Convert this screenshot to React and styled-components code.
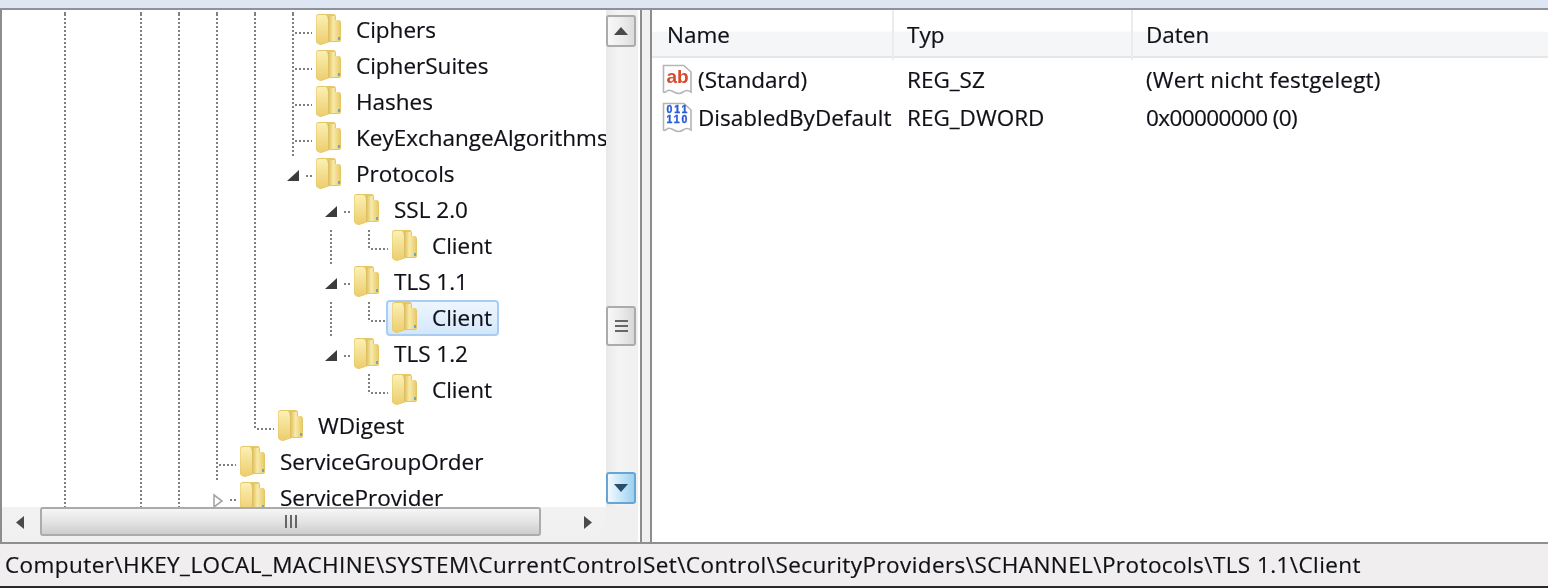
import React from 'react'
import styled, { createGlobalStyle } from 'styled-components'

const GlobalStyle = createGlobalStyle`
    html, body {
        margin: 0;
        padding: 0;
        background: #f0f0f0;
        overflow: hidden;
    }
`
const Win = styled.div`
    width: 1548px;
    height: 588px;
    display: flex;
    flex-direction: column;
    overflow: hidden;
    background: #f0f0f0;
    color: #101018;
    font-family: 'Open Sans', 'Noto Sans', sans-serif;
    font-size: 22.5px;
    -webkit-text-stroke: 0.2px #101018;
    filter: blur(0.55px);
`
const TopBand = styled.div`
    height: 8px;
    flex: none;
    background: #dfe6f3;
`
const Panes = styled.div`
    height: 536px;
    flex: none;
    display: flex;
    border-top: 2px solid #8d9299;
    border-bottom: 2px solid #8f8f8f;
    box-sizing: border-box;
`
const LeftPane = styled.div`
    width: 642px;
    flex: none;
    display: grid;
    grid-template-columns: 604px 32px;
    grid-template-rows: 497px 1fr;
    border-left: 2px solid #8d8d8d;
    border-right: 2px solid #8d8d8d;
    box-sizing: border-box;
    background: #fff;
`
const Splitter = styled.div`
    width: 8px;
    flex: none;
    background: #f0f0f0;
`
const Tree = styled.div`
    overflow: hidden;
    padding-top: 2px;
    background: #fff;
`
const Row = styled.div`
    height: ${(props) => props.$height || 36}px;
    display: flex;
    align-items: flex-start;
    padding-left: 6px;
    white-space: nowrap;
`
const dots = 'repeating-linear-gradient(to bottom, #808080 0 2px, transparent 2px 4px)'
const dotsH = 'repeating-linear-gradient(to right, #808080 0 2px, transparent 2px 4px)'
const Cell = styled.div`
    width: 38px;
    height: 100%;
    flex: none;
`
const Guide = styled(Cell)`
    background-image: ${dots};
    background-size: 2px 100%;
    background-position: 18px 0;
    background-repeat: no-repeat;
`
const Tee = styled(Cell)`
    background-image: ${dots}, ${dotsH};
    background-size: 2px 100%, 20px 2px;
    background-position: 18px 0, 21px 18px;
    background-repeat: no-repeat;
`
const Elbow = styled(Cell)`
    background-image: ${dots}, ${dotsH};
    background-size: 2px 20px, 20px 2px;
    background-position: 18px 0, 21px 18px;
    background-repeat: no-repeat;
`
const Expander = styled(Cell)`
    display: flex;
    align-items: flex-start;
    background-image: ${dotsH};
    background-size: 6px 2px;
    background-position: 32px 17px;
    background-repeat: no-repeat;
    svg {
        margin: 11px 0 0 12px;
    }
`
const Node = styled.div`
    height: 36px;
    box-sizing: border-box;
    margin: -2px 0 0 -2px;
    padding: 0 5px 0 3px;
    display: flex;
    align-items: flex-start;
    border: 2px solid ${(props) => (props.$selected ? '#a9cdf2' : 'transparent')};
    border-radius: 4px;
    background: ${(props) =>
        props.$selected ? 'linear-gradient(to bottom, #eef6fe, #d3e7fb)' : 'transparent'};
`
const Label = styled.span`
    margin-left: 15px;
    line-height: 32px;
`
const VScroll = styled.div`
    display: flex;
    flex-direction: column;
    align-items: flex-start;
    padding-top: 5px;
    background: linear-gradient(to right, #e9e9e9, #f4f4f4 40%, #f0f0f0);
`
const ScrollBtn = styled.div`
    width: 30px;
    height: 32px;
    flex: none;
    box-sizing: border-box;
    display: flex;
    align-items: center;
    justify-content: center;
    border: 2px solid ${(props) => (props.$hot ? '#69a5d2' : '#ababab')};
    border-radius: 3px;
    background: ${(props) =>
        props.$hot
            ? 'linear-gradient(to right, #f2f9fe, #c4e4f8 55%, #9cd1f0)'
            : 'linear-gradient(to right, #f8f8f8, #ececec 55%, #dcdcdc)'};
`
const VThumb = styled.div`
    width: 30px;
    height: 40px;
    flex: none;
    margin: 259px 0 126px;
    box-sizing: border-box;
    display: flex;
    flex-direction: column;
    align-items: center;
    justify-content: center;
    gap: 3px;
    border: 2px solid #ababab;
    border-radius: 3px;
    background: linear-gradient(to right, #f8f8f8, #e9e9e9 55%, #d8d8d8);
    i {
        display: block;
        width: 13px;
        height: 2px;
        background: #666;
    }
`
const HScroll = styled.div`
    display: flex;
    align-items: flex-start;
    background: linear-gradient(to bottom, #f2f2f2, #f0f0f0);
`
const HArrow = styled.div`
    width: ${(props) => props.$width}px;
    height: 30px;
    flex: none;
    display: flex;
    align-items: center;
    justify-content: center;
`
const HThumb = styled.div`
    width: 501px;
    height: 29px;
    flex: none;
    margin: 0 28px 0 2px;
    box-sizing: border-box;
    display: flex;
    align-items: center;
    justify-content: center;
    gap: 3px;
    border: 2px solid #ababab;
    border-radius: 3px;
    background: linear-gradient(to bottom, #f6f6f6, #e4e4e4 50%, #cdcdcd);
    i {
        display: block;
        width: 2px;
        height: 13px;
        background: #666;
    }
`
const Corner = styled.div`
    background: #f0f0f0;
`
const RightPane = styled.div`
    flex: 1;
    border-left: 2px solid #8d8d8d;
    background: #fff;
    min-width: 0;
`
const HeaderRow = styled.div`
    height: 48px;
    display: grid;
    grid-template-columns: 242px 239px 1fr;
    box-sizing: border-box;
    border-bottom: 2px solid #e6e6e6;
    background: linear-gradient(to bottom, #fff 0, #fff 46%, #f5f6f7 48%, #f5f6f7 100%);
`
const HeaderCell = styled.div`
    padding-left: 13px;
    line-height: 50px;
    border-right: 2px solid #ececec;
    &:first-child {
        padding-left: 15px;
    }
    &:last-child {
        border-right: 0;
    }
`
const ValueRow = styled.div`
    height: 38px;
    display: grid;
    grid-template-columns: 255px 239px 1fr;
    align-items: flex-start;
    &:nth-child(2) {
        margin-top: 3px;
    }
`
const NameCell = styled.div`
    display: flex;
    align-items: flex-start;
    padding-left: 10px;
    line-height: 38px;
`
const RegIcon = styled.svg`
    flex: none;
    margin-right: 4px;
    margin-top: 2px;
    -webkit-text-stroke: 0;
`
const ValueCell = styled.div`
    line-height: 38px;
    white-space: nowrap;
    letter-spacing: ${(props) => props.$spacing || 0}px;
`
const StatusBar = styled.div`
    height: 42px;
    flex: none;
    box-sizing: border-box;
    padding-left: 5px;
    line-height: 42px;
    white-space: nowrap;
    letter-spacing: 0.42px;
    background: #f0eeee;
`
const BottomEdge = styled.div`
    height: 2px;
    flex: none;
    background: #2a2a2a;
`

const FolderIcon = () => (
    <svg width="26" height="31" viewBox="0 0 26 31" style={{ flex: 'none' }}>
        <defs>
            <linearGradient id="leaf" x1="0" y1="0" x2="0" y2="1">
                <stop offset="0" stopColor="#fbf0b4" />
                <stop offset="1" stopColor="#eccd6e" />
            </linearGradient>
            <linearGradient id="back" x1="0" y1="0" x2="1" y2="0">
                <stop offset="0" stopColor="#dcbb58" />
                <stop offset="0.45" stopColor="#f8eaa8" />
                <stop offset="1" stopColor="#eacb6c" />
            </linearGradient>
        </defs>
        <path d="M1 3 Q1 0 4 0 H18 Q21 0 21 3 V6 H23 Q26 6 26 9 V26 Q26 28 24 28 H15 L6 31 Q1 30 1 27 Z" fill="#e6c766" />
        <path d="M13 2 H20 V6 H24 Q25 7 25 9 V27 H13 Z" fill="url(#back)" />
        <path d="M1.5 3 Q1.5 1 4 1 H11 Q13 3 13 6 V28 L6 30.5 Q1.5 30 1.5 27 Z" fill="url(#leaf)" />
        <rect x="23" y="23" width="2" height="3" fill="#58aee0" />
    </svg>
)
const OpenArrow = () => (
    <svg width="14" height="13" viewBox="0 0 14 13">
        <path d="M13 1 V12 H1 Z" fill="#3c3c3c" />
    </svg>
)
const ClosedArrow = () => (
    <svg width="14" height="16" viewBox="0 0 14 16" style={{ marginLeft: 14 }}>
        <path d="M2 2 L10 8 L2 14 Z" fill="#fff" stroke="#a6a6a6" strokeWidth="1.6" />
    </svg>
)
const Chevron = ({ dir, color = '#4a4a4a' }) => {
    const shapes = {
        up: '0,8 7,0 14,8',
        down: '0,0 14,0 7,8',
        left: '9,0 9,13 1,6.5',
        right: '1,0 1,13 9,6.5',
    }
    const wide = dir === 'up' || dir === 'down'
    return (
        <svg width={wide ? 14 : 10} height={wide ? 8 : 13}>
            <polygon points={shapes[dir]} fill={color} />
        </svg>
    )
}
const PageShape = () => (
    <path
        d="M1.5 2.5 H22 L29 9 V29 Q25 26 21 29 T12 29 T5 28 T1.5 29 Z"
        fill="#fff"
        stroke="#b5b5b5"
        strokeWidth="1.6"
    />
)
const StringIcon = () => (
    <RegIcon width="32" height="32" viewBox="0 0 32 32">
        <PageShape />
        <text x="4.5" y="20" fontFamily="'Liberation Sans', sans-serif" fontWeight="700" fontSize="19" fill="#d84a2a">
            ab
        </text>
    </RegIcon>
)
const BinaryIcon = () => (
    <RegIcon width="32" height="32" viewBox="0 0 32 32">
        <PageShape />
        <text x="4.5" y="12" fontFamily="'Liberation Sans', sans-serif" fontWeight="700" fontSize="10.5" letterSpacing="2" fill="#2a5cd8" stroke="#2a5cd8" strokeWidth="0.4">
            011
        </text>
        <text x="4.5" y="22" fontFamily="'Liberation Sans', sans-serif" fontWeight="700" fontSize="10.5" letterSpacing="2" fill="#2a5cd8" stroke="#2a5cd8" strokeWidth="0.4">
            110
        </text>
    </RegIcon>
)

const cellFor = (ch, i) => {
    if (ch === '|') return <Guide key={i} />
    if (ch === '+') return <Tee key={i} />
    if (ch === 'L') return <Elbow key={i} />
    if (ch === 'v')
        return (
            <Expander key={i}>
                <OpenArrow />
            </Expander>
        )
    if (ch === '>')
        return (
            <Expander key={i}>
                <ClosedArrow />
            </Expander>
        )
    return <Cell key={i} />
}

// one char per indent column: | guide, + tee, L elbow, v open, > closed
const treeRows = [
    { guides: '.|.|||||', short: true },
    { guides: '.|.||||+', label: 'Ciphers' },
    { guides: '.|.||||+', label: 'CipherSuites' },
    { guides: '.|.||||+', label: 'Hashes' },
    { guides: '.|.||||+', label: 'KeyExchangeAlgorithms' },
    { guides: '.|.||||v', label: 'Protocols' },
    { guides: '.|.||||.v', label: 'SSL 2.0' },
    { guides: '.|.||||.|L', label: 'Client' },
    { guides: '.|.||||.v', label: 'TLS 1.1' },
    { guides: '.|.||||.|L', label: 'Client', selected: true },
    { guides: '.|.||||.v', label: 'TLS 1.2' },
    { guides: '.|.||||..L', label: 'Client' },
    { guides: '.|.|||L', label: 'WDigest' },
    { guides: '.|.||+', label: 'ServiceGroupOrder' },
    { guides: '.|.||>', label: 'ServiceProvider' },
]

const App = () => (
    <Win>
        <GlobalStyle />
        <TopBand />
        <Panes>
            <LeftPane>
                <Tree>
                    {treeRows.map((row, i) =>
                        row.short ? (
                            <Row key={i} $height={2}>
                                {[...row.guides].map(cellFor)}
                            </Row>
                        ) : (
                            <Row key={i}>
                                {[...row.guides].map(cellFor)}
                                <Node $selected={row.selected}>
                                    <FolderIcon />
                                    <Label>{row.label}</Label>
                                </Node>
                            </Row>
                        )
                    )}
                </Tree>
                <VScroll>
                    <ScrollBtn>
                        <Chevron dir="up" />
                    </ScrollBtn>
                    <VThumb>
                        <i />
                        <i />
                        <i />
                    </VThumb>
                    <ScrollBtn $hot>
                        <Chevron dir="down" color="#2a4d6e" />
                    </ScrollBtn>
                </VScroll>
                <HScroll>
                    <HArrow $width={36}>
                        <Chevron dir="left" />
                    </HArrow>
                    <HThumb>
                        <i />
                        <i />
                        <i />
                    </HThumb>
                    <HArrow $width={37}>
                        <Chevron dir="right" />
                    </HArrow>
                </HScroll>
                <Corner />
            </LeftPane>
            <Splitter />
            <RightPane>
                <HeaderRow>
                    <HeaderCell>Name</HeaderCell>
                    <HeaderCell>Typ</HeaderCell>
                    <HeaderCell>Daten</HeaderCell>
                </HeaderRow>
                <ValueRow>
                    <NameCell>
                        <StringIcon />
                        (Standard)
                    </NameCell>
                    <ValueCell>REG_SZ</ValueCell>
                    <ValueCell $spacing={0.2}>(Wert nicht festgelegt)</ValueCell>
                </ValueRow>
                <ValueRow>
                    <NameCell>
                        <BinaryIcon />
                        DisabledByDefault
                    </NameCell>
                    <ValueCell>REG_DWORD</ValueCell>
                    <ValueCell $spacing={-0.6}>0x00000000 (0)</ValueCell>
                </ValueRow>
            </RightPane>
        </Panes>
        <StatusBar>Computer\HKEY_LOCAL_MACHINE\SYSTEM\CurrentControlSet\Control\SecurityProviders\SCHANNEL\Protocols\TLS 1.1\Client</StatusBar>
        <BottomEdge />
    </Win>
)

export default App
